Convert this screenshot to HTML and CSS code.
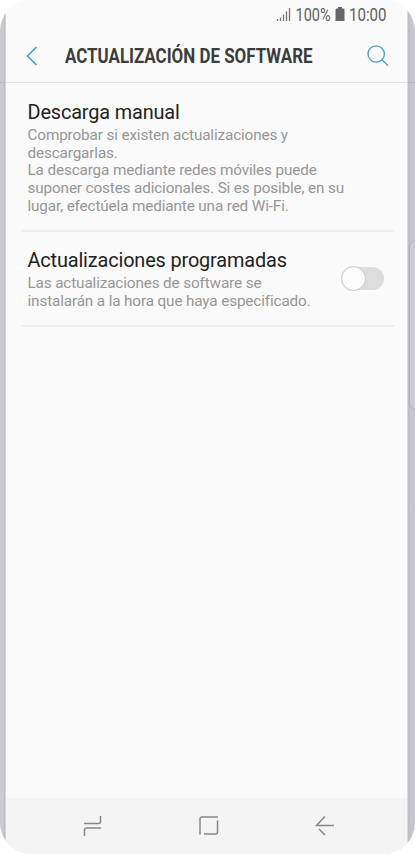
FILE: index.html
```html
<!DOCTYPE html>
<html lang="es">
<head>
<meta charset="utf-8">
<title>Actualización de software</title>
<link rel="stylesheet" href="styles.css">
</head>
<body>
<div class="phone">
  <div class="side-panel"></div>
  <main class="screen">
    <div class="status">
      <svg class="signal" width="16" height="15" viewBox="0 0 16 15"><path d="M1.500 14v-2M4.500 14v-3.500M7.500 14V7.500M10.500 14V4.500M13.500 14V1" stroke="#777" stroke-width="1.3"/></svg>
      <svg width="36" height="24"><text class="status-text" x="0.500" y="16" textLength="35" lengthAdjust="spacingAndGlyphs">100%</text></svg>
      <svg class="battery" width="10" height="14" viewBox="0 0 10 14"><path d="M3 0h4v1.500h1.200q1.300 0 1.300 1.300V14H.5V2.800Q.5 1.500 1.800 1.500H3z" fill="#666"/></svg>
      <svg class="clock" width="39" height="24"><text class="status-text" x="0" y="16" textLength="37.500" lengthAdjust="spacingAndGlyphs">10:00</text></svg>
    </div>
    <header class="header">
      <svg class="back" width="12" height="20" viewBox="0 0 12 20"><path d="M10.500 1L1.500 10l9 9" fill="none" stroke="#46a0c4" stroke-width="1.600"/></svg>
      <svg class="heading" width="250" height="30"><text class="heading-text" x="0" y="20" textLength="247.500" lengthAdjust="spacingAndGlyphs">ACTUALIZACIÓN DE SOFTWARE</text></svg>
      <svg class="search" width="22" height="22" viewBox="0 0 22 22"><g fill="none" stroke="#46a0c4" stroke-width="1.300"><circle cx="9.200" cy="9" r="8.200"/><path d="M15 14.800l6 6"/></g></svg>
    </header>
    <section class="row manual">
      <div>
        <h2>Descarga manual</h2>
        <p>Comprobar si existen actualizaciones y<br>descargarlas.<br>La descarga mediante redes móviles puede<br>suponer costes adicionales. Si es posible, en su<br>lugar, efectúela mediante una red Wi-Fi.</p>
      </div>
    </section>
    <section class="row scheduled">
      <div>
        <h2>Actualizaciones programadas</h2>
        <p>Las actualizaciones de software se<br>instalarán a la hora que haya especificado.</p>
      </div>
      <div class="switch"><span class="knob"></span></div>
    </section>
    <nav class="nav">
      <svg width="20" height="22" viewBox="0 0 20 22"><path d="M1 8.500h14.500q2 0 2-2V1M18 13H3.500q-2 0-2 2v6"/></svg>
      <svg width="20" height="22" viewBox="0 0 20 22"><path d="M19 2H3Q1 2 1 4v15.500M5 19h11.500q2 0 2-2V5.500"/></svg>
      <svg width="20" height="22" viewBox="0 0 20 22"><path d="M19 10.500H1.500L10 1.500M4 14l6 6"/></svg>
    </nav>
  </main>
  <div class="side-panel right"><div class="side-key"></div></div>
</div>
</body>
</html>
```
FILE: styles.css
```css
* { box-sizing: border-box; }
body { margin: 0; background: #fff; font-family: Roboto, sans-serif; overflow: hidden; }
.phone { position: relative; display: flex; width: 415px; height: 854px; overflow: hidden; border-radius: 31px; background: #fafafa; }
.side-panel { flex: 0 0 6px; min-width: 0; background: linear-gradient(#fafafa 13px, transparent 13px 82px, #b9bac0 82px 83px, transparent 83px), linear-gradient(90deg, #cbccd2, #c8c9cf 70%, #b9bac0); border-right: 1px solid #d5d5d8; }
.side-panel.right { flex-basis: 8px; padding-top: 240px; background: linear-gradient(#fafafa 11px, transparent 11px 82px, #b4b5bc 82px 83px, transparent 83px), linear-gradient(90deg, #bcbdc4, #c6c7cf 50%, #c4c5cd); border: 0; border-left: 1px solid #dcdcdf; }
.side-key { width: 14px; height: 170px; margin-left: 1px; border: 1px solid #adaeb5; border-radius: 7px; background: #cbccd3; }
.screen { display: flex; flex-direction: column; flex: 1; min-width: 0; background: #fafafa; }
svg { display: block; flex: none; overflow: visible; }
.status { display: flex; height: 30px; padding: 5px 0 0 270px; }
.signal { margin: 2px 3px 0 0; }
.battery { margin: 2px 4.5px 0 3.5px; }
.status-text { font-size: 17.5px; fill: #606060; }
.header { display: flex; align-items: flex-start; height: 53px; border-bottom: 1px solid #e0e1e3; }
.back { margin: 16px 0 0 20px; }
.heading { margin: 13px 0 0 27px; }
.heading-text { font-size: 19.8px; font-weight: 700; fill: #3c3c3c; }
.search { margin: 15px 18px 0 auto; }
.row { display: flex; margin: 0 13px 0 15px; padding: 0 0 0 6.5px; border-bottom: 2px solid #efefef; }
.manual { height: 149px; padding-top: 17px; }
.scheduled { height: 95px; padding-top: 16px; }
h2 { margin: 0; font-size: 19.9px; line-height: 26px; font-weight: 400; letter-spacing: -0.15px; color: #222; white-space: nowrap; }
p { margin: 1px 0 0; font-size: 15.3px; line-height: 17.7px; letter-spacing: -0.14px; color: #969696; white-space: nowrap; }
.switch { width: 42px; height: 23px; margin: 19px 10px 0 auto; border-radius: 12px; background: #dcdcdc; }
.knob { display: block; width: 25px; height: 25px; margin: -1px 0 0 -1px; border: 1px solid #c6c6c6; border-radius: 50%; background: #fcfcfc; }
.nav { display: flex; justify-content: space-between; align-items: flex-start; height: 56px; margin-top: auto; padding: 17px 72px 0 76.5px; background: #f4f4f4; }
.nav path { fill: none; stroke: #888; stroke-width: 1.5; }
```
